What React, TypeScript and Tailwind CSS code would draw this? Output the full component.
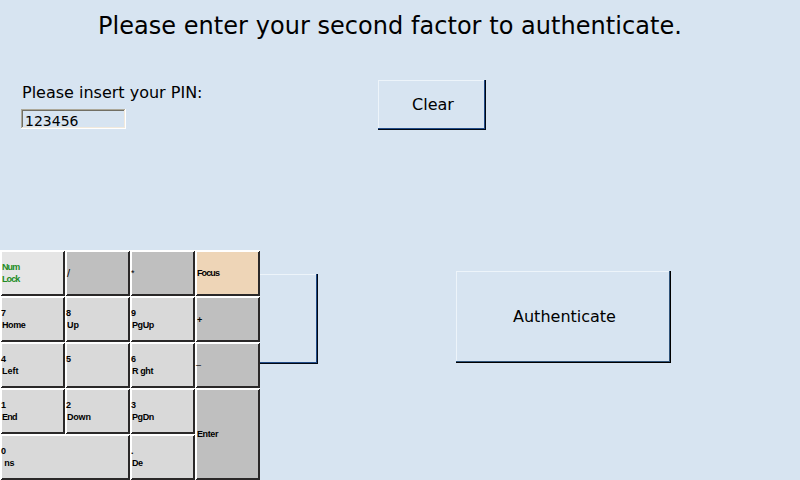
type KeyProps = { lines: string[]; className?: string; tracking?: string; weight?: string };

const GREY = 'bg-[#bfbfbf]';
const LIGHT = 'bg-[#d9d9d9]';

function Key({ lines, className = LIGHT, tracking = 'tracking-normal', weight = 'font-bold text-[9px]' }: KeyProps) {
  return (
    <button
      className={`flex flex-col items-start justify-center overflow-hidden pl-0.5 text-left font-['Liberation_Sans',sans-serif] leading-[12px] whitespace-pre shadow-[inset_1px_1px_#fff,inset_-1px_-1px_#2a2828,inset_2px_2px_#fff,inset_-2px_-2px_#2a2828] ${weight} ${tracking} ${className}`}
    >
      {lines.map((line, i) => (
        <span key={i} className={i === 0 && line.length === 1 ? '-ml-px h-3' : 'h-3'}>
          {line}
        </span>
      ))}
    </button>
  );
}

function Keypad() {
  return (
    <div className="relative z-10 grid h-[230px] w-[260px] grid-cols-4 grid-rows-5">
      <Key lines={['Num', 'Lock']} className="bg-[#e5e5e5] text-[#228b22]" tracking="tracking-[-0.9px]" />
      <Key lines={['/']} className={`pl-[3px] ${GREY}`} weight="font-normal text-[11px]" />
      <Key lines={['*']} className={GREY} weight="font-normal text-[9px]" />
      <Key lines={['Focus']} className="bg-[#eed5b7]" tracking="tracking-[-0.9px]" />
      <Key lines={['7', 'Home']} tracking="tracking-[-0.4px]" />
      <Key lines={['8', 'Up']} />
      <Key lines={['9', 'PgUp']} tracking="tracking-[-0.4px]" />
      <Key lines={['+']} className={`pl-[3px] pt-0.5 ${GREY}`} />
      <Key lines={['4', 'Left']} />
      <Key lines={['5', ' ']} />
      <Key lines={['6', 'R ght']} tracking="tracking-[-0.4px]" />
      <Key lines={['–']} className={GREY} weight="font-normal text-[9px]" />
      <Key lines={['1', 'End']} tracking="tracking-[-0.7px]" />
      <Key lines={['2', 'Down']} tracking="tracking-[-0.2px]" />
      <Key lines={['3', 'PgDn']} tracking="tracking-[-0.4px]" />
      <Key lines={['Enter']} className={`row-span-2 ${GREY}`} tracking="tracking-[-0.4px]" />
      <Key lines={['0', ' ns']} className={`col-span-2 ${LIGHT}`} tracking="tracking-[-0.3px]" />
      <Key lines={['.', 'De']} tracking="tracking-[-0.4px]" />
    </div>
  );
}

export default function App() {
  return (
    <main className="flex h-[480px] w-[800px] flex-col overflow-hidden bg-[#d7e4f1] font-['DejaVu_Sans',sans-serif] text-base text-black">
      <h1 className="h-[80px] pt-[10px] pl-[98px] text-[24px] leading-[32px] tracking-[0.04px] whitespace-nowrap">
        Please enter your second factor to authenticate.
      </h1>
      <section className="flex h-[170px] items-start">
        <label className="block w-[378px] pl-[21px]">
          <span className="block h-[29px] pl-px leading-[25px]">Please insert your PIN:</span>
          <input
            defaultValue="123456"
            className="block h-[20px] w-[105px] bg-transparent pt-[4px] pl-[4px] text-[14px] leading-[16px] shadow-[inset_-1px_-1px_#fff,inset_1px_1px_#aca899,inset_-2px_-2px_#f1e9dc,inset_2px_2px_#716f64] outline-none"
          />
        </label>
        <button className="h-[50px] w-[108px] pl-[2px] shadow-[inset_-1px_-1px_#000814,inset_-2px_-2px_#204a87,inset_1px_1px_#edf4fa]">
          Clear
        </button>
      </section>
      <section className="flex h-[230px] items-start">
        <Keypad />
        <button
          aria-label="Option"
          className="-ml-[104px] mt-[24px] h-[90px] w-[162px] shadow-[inset_-1px_-1px_#000814,inset_-2px_-2px_#204a87,inset_1px_1px_#edf4fa]"
        />
        <button className="mt-[21px] ml-[138px] h-[92px] w-[215px] pl-[2px] shadow-[inset_-1px_-1px_#000,inset_-2px_-2px_#2f5379,inset_1px_1px_#edf4fa]">
          Authenticate
        </button>
      </section>
    </main>
  );
}
